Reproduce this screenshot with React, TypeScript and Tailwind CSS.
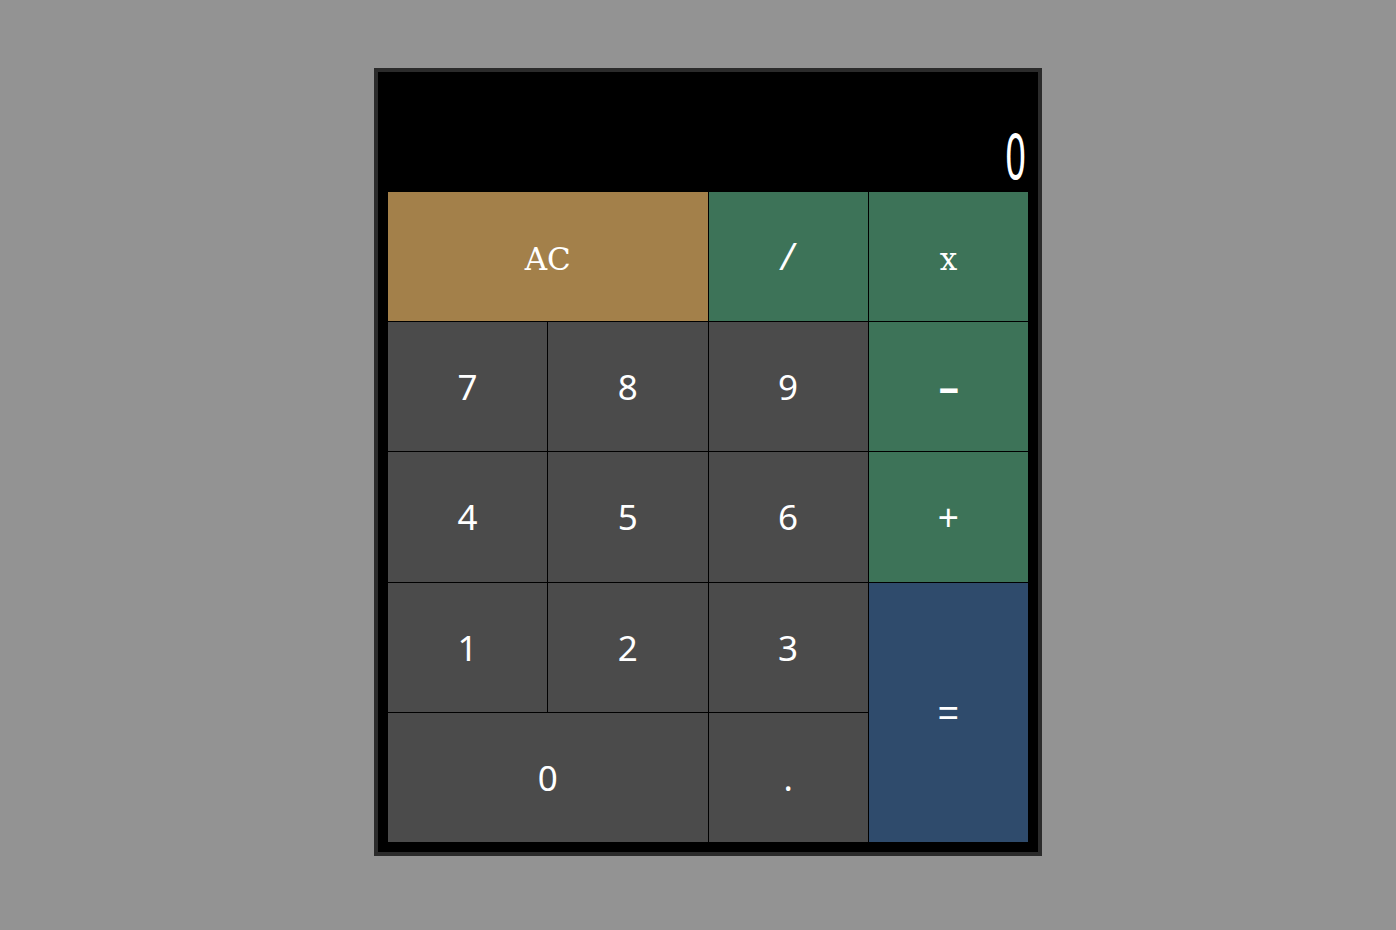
import React from 'react';

const serif = "font-['DejaVu_Serif',serif] text-[31px] pt-[5px]";
const mono = "font-['Liberation_Mono',monospace] text-[36px] pt-[8px]";
const sans = "font-['Noto_Sans',sans-serif] text-[35px]";

const keys = [
  { label: 'AC', cls: `col-span-2 bg-[#a3804a] ${serif}` },
  { label: '/', cls: `bg-[#3d7358] ${mono}` },
  { label: 'x', cls: `bg-[#3d7358] ${serif}` },
  { label: '7', cls: `bg-[#4b4b4b] ${sans}` },
  { label: '8', cls: `bg-[#4b4b4b] ${sans}` },
  { label: '9', cls: `bg-[#4b4b4b] ${sans}` },
  { label: '-', cls: `bg-[#3d7358] ${mono} font-bold`, inner: 'scale-x-[1.7]' },
  { label: '4', cls: `bg-[#4b4b4b] ${sans}` },
  { label: '5', cls: `bg-[#4b4b4b] ${sans}` },
  { label: '6', cls: `bg-[#4b4b4b] ${sans}` },
  { label: '+', cls: `bg-[#3d7358] ${mono}` },
  { label: '1', cls: `bg-[#4b4b4b] ${sans}` },
  { label: '2', cls: `bg-[#4b4b4b] ${sans}` },
  { label: '3', cls: `bg-[#4b4b4b] ${sans}` },
  { label: '=', cls: `row-span-2 bg-[#2f4b6c] ${mono}` },
  { label: '0', cls: `col-span-2 bg-[#4b4b4b] ${sans}` },
  { label: '.', cls: `bg-[#4b4b4b] ${sans}` },
];

export default function App() {
  return (
    <div className="min-h-[930px] w-full bg-[#939393] pt-[68px] pl-[374px]">
      <div className="w-[668px] border-4 border-[#2b2b2b] bg-black px-[10px] pb-[10px]">
        <div className="flex h-[120px] items-end justify-end pb-[3px] pr-[2px]">
          <span className="inline-block origin-right scale-x-[0.55] font-['DejaVu_Sans',sans-serif] text-[62px] leading-none text-white">
            0
          </span>
        </div>
        <div className="grid h-[650px] grid-cols-4 grid-rows-5 gap-px bg-black">
          {keys.map((k) => (
            <button
              key={k.label}
              className={`${k.cls} flex items-center justify-center leading-none text-white`}
            >
              <span className={`inline-block ${k.inner ?? ''}`}>{k.label}</span>
            </button>
          ))}
        </div>
      </div>
    </div>
  );
}
